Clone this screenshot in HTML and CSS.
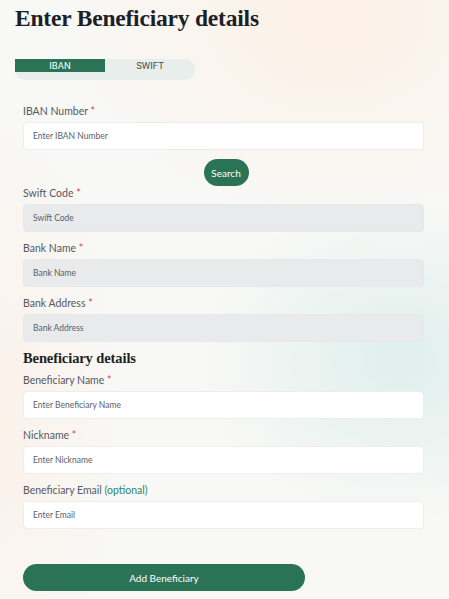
FILE: index.html
```html
<!DOCTYPE html>
<html>
<head>
<meta charset="utf-8">
<link rel="stylesheet" href="styles.css">
</head>
<body>
<div class="page">
  <h1 class="title">Enter Beneficiary details</h1>
  <div class="tabs">
    <div class="tab active">IBAN</div>
    <div class="tab">SWIFT</div>
  </div>
  <form class="form">
    <div class="field">
      <label class="label">IBAN Number <span class="req">*</span></label>
      <div class="input">Enter IBAN Number</div>
    </div>
    <div class="search-row"><button type="button" class="search-btn">Search</button></div>
    <div class="field">
      <label class="label">Swift Code <span class="req">*</span></label>
      <div class="input disabled">Swift Code</div>
    </div>
    <div class="field">
      <label class="label">Bank Name <span class="req">*</span></label>
      <div class="input disabled">Bank Name</div>
    </div>
    <div class="field">
      <label class="label">Bank Address <span class="req">*</span></label>
      <div class="input disabled">Bank Address</div>
    </div>
    <h2 class="subtitle">Beneficiary details</h2>
    <div class="field first">
      <label class="label">Beneficiary Name <span class="req">*</span></label>
      <div class="input">Enter Beneficiary Name</div>
    </div>
    <div class="field">
      <label class="label">Nickname <span class="req">*</span></label>
      <div class="input">Enter Nickname</div>
    </div>
    <div class="field">
      <label class="label">Beneficiary Email <span class="opt">(optional)</span></label>
      <div class="input">Enter Email</div>
    </div>
    <button type="button" class="submit">Add Beneficiary</button>
  </form>
</div>
</body>
</html>
```

FILE: styles.css
```css
html, body {
  margin: 0;
  padding: 0;
}
body {
  width: 449px;
  min-height: 599px;
  font-family: Lato, "Open Sans", sans-serif;
  background:
    radial-gradient(ellipse 200px 160px at 400px 360px, rgba(214, 236, 232, 0.75), rgba(214, 236, 232, 0) 100%),
    radial-gradient(ellipse 260px 200px at 330px 20px, rgba(253, 240, 228, 0.9), rgba(253, 240, 228, 0) 100%),
    radial-gradient(ellipse 120px 300px at 0px 420px, rgba(252, 240, 230, 0.8), rgba(252, 240, 230, 0) 100%),
    #f8f8f6;
  overflow: hidden;
}
.page {
  padding: 0 0 8px 15px;
}
.title {
  margin: 2px 0 0 0;
  font-family: "Liberation Serif", "DejaVu Serif", serif;
  font-weight: bold;
  font-size: 23.5px;
  line-height: 32px;
  color: #1c1f26;
  letter-spacing: -0.2px;
}
.tabs {
  margin-top: 25px;
  width: 180px;
  height: 21px;
  background: #e8eeeb;
  border-radius: 0 10px 10px 10px;
  display: flex;
  align-items: flex-start;
}
.tab {
  width: 90px;
  height: 13px;
  line-height: 13px;
  text-align: center;
  font-family: Roboto, "Liberation Sans", sans-serif;
  font-size: 9.5px;
  color: #4a4f52;
}
.tab.active {
  background: #2b7356;
  color: #ffffff;
}
.form {
  margin: 24px 0 0 8px;
  width: 401px;
  display: flex;
  flex-direction: column;
}
.field {
  display: flex;
  flex-direction: column;
  margin-top: 9px;
}
.field:first-child {
  margin-top: 0;
}
.field.first {
  margin-top: 0;
}
.label {
  font-size: 10.5px;
  line-height: 14px;
  color: #555a5e;
  margin-bottom: 4px;
}
.req {
  color: #e0434f;
}
.opt {
  color: #2f8466;
}
.input {
  height: 26px;
  line-height: 26px;
  border: 1px solid #ecedec;
  border-radius: 4px;
  background: #ffffff;
  padding: 0 9px;
  font-size: 8.5px;
  color: #5c6166;
}
.input.disabled {
  background: #e8eaec;
  border-color: #e6e8ea;
}
.search-row {
  display: flex;
  justify-content: center;
  margin-top: 9px;
  height: 27px;
  margin-bottom: -9px;
}
.search-btn {
  width: 45px;
  height: 27px;
  border: none;
  border-radius: 14px;
  background: #2b7356;
  color: #ffffff;
  font-family: Lato, "Open Sans", sans-serif;
  font-size: 10px;
  padding: 0;
  margin-left: 5px;
}
.subtitle {
  margin: 6px 0 5px 0;
  font-family: "Liberation Serif", "DejaVu Serif", serif;
  font-weight: bold;
  font-size: 14.5px;
  line-height: 20px;
  color: #1c1f26;
  letter-spacing: -0.1px;
}
.submit {
  margin-top: 35px;
  width: 282px;
  height: 27px;
  border: none;
  border-radius: 14px;
  background: #2b7356;
  color: #ffffff;
  font-family: Lato, "Open Sans", sans-serif;
  font-size: 10px;
  padding: 0;
}
```
